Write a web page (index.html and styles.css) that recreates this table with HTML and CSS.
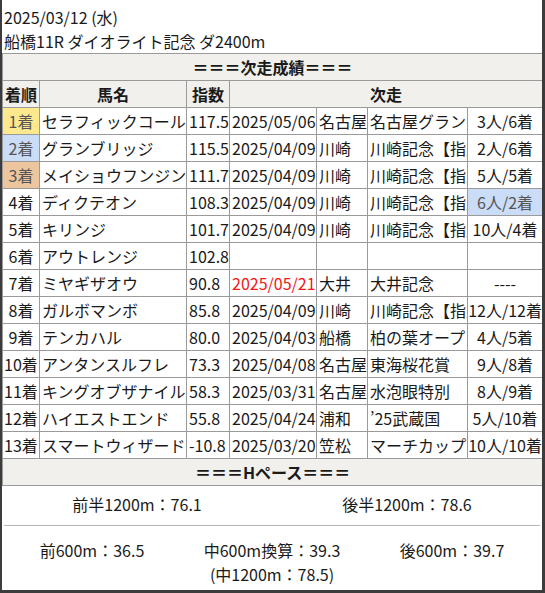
FILE: index.html
```html
<!DOCTYPE html>
<html lang="ja">
<head>
<meta charset="utf-8">
<title>次走成績</title>
<link rel="stylesheet" href="styles.css">
</head>
<body>
<div class="frame">
  <div class="title">
    <div>2025/03/12 (水)</div>
    <div>船橋11R ダイオライト記念 ダ2400m</div>
  </div>
  <table class="res">
    <colgroup>
      <col class="c-rank"><col class="c-name"><col class="c-idx"><col class="c-date"><col class="c-venue"><col class="c-race"><col class="c-result">
    </colgroup>
    <thead>
      <tr><th colspan="7">＝＝＝次走成績＝＝＝</th></tr>
      <tr><th>着順</th><th>馬名</th><th>指数</th><th colspan="4">次走</th></tr>
    </thead>
    <tbody>
      <tr><td class="rank gold">1着</td><td>セラフィックコール</td><td>117.5</td><td>2025/05/06</td><td>名古屋</td><td class="race">名古屋グランプリ</td><td class="result">3人/6着</td></tr>
      <tr><td class="rank silver">2着</td><td>グランブリッジ</td><td>115.5</td><td>2025/04/09</td><td>川崎</td><td class="race">川崎記念【指定】</td><td class="result">2人/6着</td></tr>
      <tr><td class="rank bronze">3着</td><td>メイショウフンジン</td><td>111.7</td><td>2025/04/09</td><td>川崎</td><td class="race">川崎記念【指定】</td><td class="result">5人/5着</td></tr>
      <tr><td class="rank">4着</td><td>ディクテオン</td><td>108.3</td><td>2025/04/09</td><td>川崎</td><td class="race">川崎記念【指定】</td><td class="result silver">6人/2着</td></tr>
      <tr><td class="rank">5着</td><td>キリンジ</td><td>101.7</td><td>2025/04/09</td><td>川崎</td><td class="race">川崎記念【指定】</td><td class="result">10人/4着</td></tr>
      <tr><td class="rank">6着</td><td>アウトレンジ</td><td>102.8</td><td></td><td></td><td class="race"></td><td class="result"></td></tr>
      <tr><td class="rank">7着</td><td>ミヤギザオウ</td><td>90.8</td><td class="future">2025/05/21</td><td>大井</td><td class="race">大井記念</td><td class="result">----</td></tr>
      <tr><td class="rank">8着</td><td>ガルボマンボ</td><td>85.8</td><td>2025/04/09</td><td>川崎</td><td class="race">川崎記念【指定】</td><td class="result">12人/12着</td></tr>
      <tr><td class="rank">9着</td><td>テンカハル</td><td>80.0</td><td>2025/04/03</td><td>船橋</td><td class="race">柏の葉オープン</td><td class="result">4人/5着</td></tr>
      <tr><td class="rank">10着</td><td>アンタンスルフレ</td><td>73.3</td><td>2025/04/08</td><td>名古屋</td><td class="race">東海桜花賞</td><td class="result">9人/8着</td></tr>
      <tr><td class="rank">11着</td><td>キングオブザナイル</td><td>58.3</td><td>2025/03/31</td><td>名古屋</td><td class="race">水泡眼特別</td><td class="result">8人/9着</td></tr>
      <tr><td class="rank">12着</td><td>ハイエストエンド</td><td>55.8</td><td>2025/04/24</td><td>浦和</td><td class="race">’25武蔵国</td><td class="result">5人/10着</td></tr>
      <tr><td class="rank">13着</td><td>スマートウィザード</td><td>-10.8</td><td>2025/03/20</td><td>笠松</td><td class="race">マーチカップ</td><td class="result">10人/10着</td></tr>
    </tbody>
    <tfoot>
      <tr><th colspan="7">＝＝＝Hペース＝＝＝</th></tr>
    </tfoot>
  </table>
  <div class="pace">
    <div class="halves">
      <div>前半1200m：76.1</div>
      <div>後半1200m：78.6</div>
    </div>
    <hr class="sep">
    <div class="thirds">
      <div>前600m：36.5</div>
      <div>中600m換算：39.3<br>(中1200m：78.5)</div>
      <div>後600m：39.7</div>
    </div>
  </div>
</div>
</body>
</html>
```

FILE: styles.css
```css
html, body {
  margin: 0;
  padding: 0;
  background: #ffffff;
}
body {
  font-family: "Noto Sans CJK JP", "Noto Sans", sans-serif;
  font-size: 16px;
  color: #1a1a1a;
}
.frame {
  width: 540px;
  height: 590px;
  background: #fff;
  border-left: 2px solid #3c3c3c;
  border-right: 3px solid #3c3c3c;
  border-bottom: 3px solid #3c3c3c;
  overflow: hidden;
}
.title {
  padding: 5px 2px 0;
  line-height: 24px;
}
.res {
  width: 540px;
  border-collapse: collapse;
  table-layout: fixed;
}
.c-rank { width: 37px; }
.c-name { width: 147px; }
.c-idx { width: 43px; }
.c-date { width: 87px; }
.c-venue { width: 51px; }
.c-race { width: 100px; }
.c-result { width: 75px; }
.res th, .res td {
  border: 1px solid #9a9a9a;
  line-height: 24px;
  padding: 1px 2px;
  white-space: nowrap;
  overflow: hidden;
}
.res th {
  background: #f1f0ec;
  font-weight: bold;
  text-align: center;
}
.res td {
  text-align: left;
}
.res td.rank {
  text-align: center;
  padding: 1px 0;
}
.res td.result {
  text-align: center;
  padding: 1px 0;
}
.res td.race {
  text-overflow: clip;
}
.gold { background: #fde88e; }
.silver { background: #cadcf6; }
.bronze { background: #edc6a0; }
.res td.gold, .res td.silver, .res td.bronze { color: #555; }
.future { color: #f01818; }
.pace {
  line-height: 24px;
  text-align: center;
}
.halves {
  display: grid;
  grid-template-columns: 1fr 1fr;
  padding: 6px 0 9px;
}
.sep {
  border: 0;
  border-top: 1px solid #b4b4b4;
  margin: 0 2px;
  height: 0;
}
.thirds {
  display: grid;
  grid-template-columns: 1fr 1fr 1fr;
  padding-top: 12px;
}
```
